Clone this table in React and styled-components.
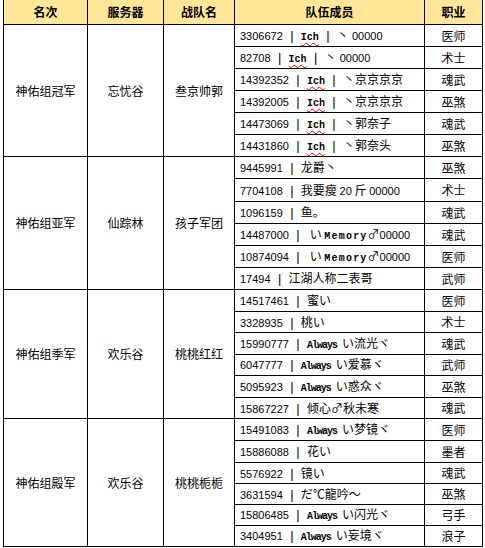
import styled, { createGlobalStyle } from "styled-components";

const GlobalStyle = createGlobalStyle`
  html, body {
    margin: 0;
    padding: 0;
    background: #fff;
  }
  body {
    font-family: "Noto Sans CJK SC", "Liberation Sans", sans-serif;
    color: #000;
  }
`;

const Page = styled.div`
  padding-left: 3px;
  overflow: hidden;
  height: 548px;
`;

const Table = styled.table`
  border-collapse: collapse;
  table-layout: fixed;
  width: 480px;
  margin-top: -1px;
  font-size: 12px;
`;

const HeadCell = styled.th`
  background: #ffe699;
  border: 1px solid #000;
  height: 24px;
  padding: 0;
  font-size: 12px;
  font-weight: 700;
  text-align: center;
  vertical-align: middle;
  line-height: 1;
`;

const GroupCell = styled.td`
  border: 1px solid #000;
  padding: 0;
  text-align: center;
  vertical-align: middle;
  font-size: 12px;
  line-height: 1;
`;

const MemberCell = styled.td`
  border: 1px solid #000;
  padding: 0 0 0 5px;
  text-align: left;
  vertical-align: middle;
  white-space: nowrap;
  overflow: hidden;
  font-size: 12px;
  line-height: 1;
`;

const JobCell = styled.td`
  border: 1px solid #000;
  padding: 0;
  text-align: center;
  vertical-align: middle;
  font-size: 12px;
  line-height: 1;
`;

const Row = styled.tr`
  height: ${(p) => p.$h}px;
`;

const Num = styled.span`
  font-family: "Liberation Sans", Arial, sans-serif;
  font-size: 11px;
`;

const Sep = styled.span`
  display: inline-block;
  width: 12px;
  margin: 0 3px;
  text-align: center;
  font-family: "Liberation Sans", Arial, sans-serif;
  font-size: 13px;
  color: #000;
`;

const Latin = styled.span`
  font-family: "Liberation Mono", "Courier New", monospace;
  font-size: 10px;
  font-weight: ${(p) => (p.$bold ? 700 : 400)};
  letter-spacing: ${(p) => p.$ls || 0}px;
`;

const Ich = styled(Latin)`
  text-decoration: underline wavy #e00000;
  text-decoration-thickness: 1px;
  text-underline-offset: 2px;
`;

const Zero = styled.span`
  font-family: "Liberation Sans", Arial, sans-serif;
  font-size: 11px;
`;

// text pieces: z = digits, l = latin word, c = cjk
const ich = (id, rest) => ({
  id,
  parts: [["ich"], ["sep"], ["c", "丶"], ...rest],
});

const groups = [
  {
    rank: "神佑组冠军",
    server: "忘忧谷",
    team: "叁京帅郭",
    heights: [22, 22, 22, 22, 22, 22],
    members: [
      [ich("3306672", [["z", " 00000"]]), "医师"],
      [ich("82708", [["z", " 00000"]]), "术士"],
      [ich("14392352", [["c", "京京京京"]]), "魂武"],
      [ich("14392005", [["c", "京京京京"]]), "巫煞"],
      [ich("14473069", [["c", "郭奈子"]]), "魂武"],
      [ich("14431860", [["c", "郭奈头"]]), "巫煞"],
    ],
  },
  {
    rank: "神佑组亚军",
    server: "仙踪林",
    team: "孩子军团",
    heights: [22, 23, 22, 22, 22, 22],
    members: [
      [{ id: "9445991", parts: [["c", "龙爵丶"]] }, "巫煞"],
      [{ id: "7704108", parts: [["c", "我要瘦 "], ["z", "20"], ["c", " 斤 "], ["z", "00000"]] }, "术士"],
      [{ id: "1096159", parts: [["c", "鱼。"]] }, "魂武"],
      [{ id: "14487000", parts: [["c", " い "], ["l", "Memory", 1.2], ["c", "♂"], ["z", "00000"]] }, "魂武"],
      [{ id: "10874094", parts: [["c", " い "], ["l", "Memory", 1.2], ["c", "♂"], ["z", "00000"]] }, "医师"],
      [{ id: "17494", parts: [["c", "江湖人称二表哥"]] }, "武师"],
    ],
  },
  {
    rank: "神佑组季军",
    server: "欢乐谷",
    team: "桃桃红红",
    heights: [22, 21, 22, 21, 22, 21],
    members: [
      [{ id: "14517461", parts: [["c", "蜜い"]] }, "医师"],
      [{ id: "3328935", parts: [["c", "桃い"]] }, "术士"],
      [{ id: "15990777", parts: [["l", "Always ", -1], ["c", "い流光ヾ"]] }, "魂武"],
      [{ id: "6047777", parts: [["l", "Always ", -1], ["c", "い爱慕ヾ"]] }, "武师"],
      [{ id: "5095923", parts: [["l", "Always ", -1], ["c", "い惑众ヾ"]] }, "巫煞"],
      [{ id: "15867227", parts: [["c", "倾心♂秋未寒"]] }, "魂武"],
    ],
  },
  {
    rank: "神佑组殿军",
    server: "欢乐谷",
    team: "桃桃栀栀",
    heights: [22, 22, 21, 21, 21, 21],
    members: [
      [{ id: "15491083", parts: [["l", "Always ", -1], ["c", "い梦镜ヾ"]] }, "医师"],
      [{ id: "15886088", parts: [["c", "花い"]] }, "墨者"],
      [{ id: "5576922", parts: [["c", "镜い"]] }, "魂武"],
      [{ id: "3631594", parts: [["c", "だ℃龍吟〜"]] }, "巫煞"],
      [{ id: "15806485", parts: [["l", "Always ", -1], ["c", "い闪光ヾ"]] }, "弓手"],
      [{ id: "3404951", parts: [["l", "Always ", -1], ["c", "い妄境ヾ"]] }, "浪子"],
    ],
  },
];

function Piece({ p }) {
  const [kind, text, ls] = p;
  if (kind === "ich") return <Ich $bold>Ich</Ich>;
  if (kind === "sep") return <Sep>|</Sep>;
  if (kind === "z") return <Zero>{text}</Zero>;
  if (kind === "l") return <Latin $bold $ls={ls}>{text}</Latin>;
  return <span>{text}</span>;
}

function Member({ m }) {
  return (
    <>
      <Num>{m.id}</Num>
      <Sep>|</Sep>
      {m.parts.map((p, i) => (
        <Piece key={i} p={p} />
      ))}
    </>
  );
}

export default function App() {
  return (
    <>
      <GlobalStyle />
      <Page>
        <Table>
          <colgroup>
            <col style={{ width: 84 }} />
            <col style={{ width: 76 }} />
            <col style={{ width: 71 }} />
            <col style={{ width: 190 }} />
            <col style={{ width: 58 }} />
          </colgroup>
          <thead>
            <tr>
              <HeadCell>名次</HeadCell>
              <HeadCell>服务器</HeadCell>
              <HeadCell>战队名</HeadCell>
              <HeadCell>队伍成员</HeadCell>
              <HeadCell>职业</HeadCell>
            </tr>
          </thead>
          <tbody>
            {groups.map((g) =>
              g.members.map(([m, job], i) => (
                <Row key={g.rank + i} $h={g.heights[i]}>
                  {i === 0 && (
                    <>
                      <GroupCell rowSpan={6}>{g.rank}</GroupCell>
                      <GroupCell rowSpan={6}>{g.server}</GroupCell>
                      <GroupCell rowSpan={6}>{g.team}</GroupCell>
                    </>
                  )}
                  <MemberCell>
                    <Member m={m} />
                  </MemberCell>
                  <JobCell>{job}</JobCell>
                </Row>
              ))
            )}
          </tbody>
        </Table>
      </Page>
    </>
  );
}
